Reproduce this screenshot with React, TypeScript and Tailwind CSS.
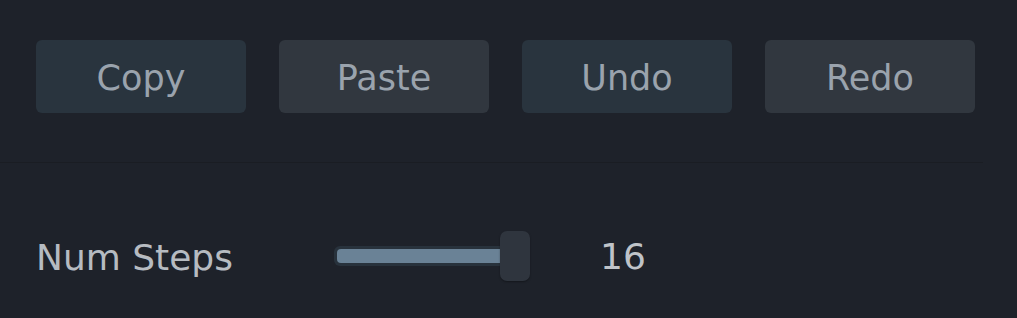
const buttons = [
  { label: 'Copy', tone: 'bg-[#29343e]' },
  { label: 'Paste', tone: 'bg-[#31373f]' },
  { label: 'Undo', tone: 'bg-[#29343e]' },
  { label: 'Redo', tone: 'bg-[#31373f]' },
];

export default function App() {
  const value = 16;

  return (
    <div className="h-[318px] w-[1017px] overflow-hidden bg-[#1e222a] font-['DejaVu_Sans',sans-serif]">
      <div className="flex gap-[33px] pl-[36px] pt-[40px]">
        {buttons.map((b) => (
          <button
            key={b.label}
            className={`flex h-[73px] w-[210px] items-center justify-center rounded-[6px] text-[35px] leading-none text-[#9aa3ad] ${b.tone}`}
          >
            <span className="pt-[3px]">{b.label}</span>
          </button>
        ))}
      </div>

      <div className="mt-[49px] h-px w-[983px] bg-[#1a1d23]" />

      <div className="mt-[68px] flex h-[50px] items-center pl-[36px]">
        <span className="w-[298px] pt-[4px] text-[36px] leading-none text-[#b6bbc1]">Num Steps</span>
        <div className="relative flex h-[50px] w-[196px] items-center">
          <div className="h-[20px] w-[181px] rounded-[6px] bg-[#28323c] p-[3px]">
            <div className="h-full w-full rounded-[4px] bg-[#6a8296]" />
          </div>
          <div className="absolute left-[166px] top-0 h-[50px] w-[30px] rounded-[7px] bg-[#2f353e] shadow-[0_1px_2px_rgba(0,0,0,0.35)]" />
        </div>
        <span className="ml-[70px] pt-[2px] text-[36px] leading-none text-[#bfc3c8]">{value}</span>
      </div>
    </div>
  );
}
